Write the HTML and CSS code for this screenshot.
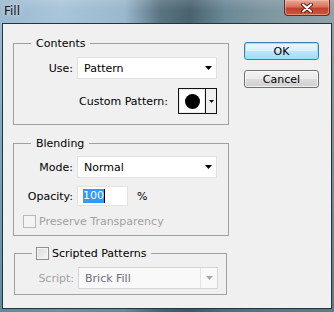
FILE: index.html
```html
<!DOCTYPE html>
<html lang="en">
<head>
    <meta charset="UTF-8">
    <title>Fill</title>
    <link rel="stylesheet" href="styles.css">
</head>
<body>
    <div class="window">
        <div class="titlebar">
            <span class="title">Fill</span>
            <div class="close-btn">
                <svg width="12" height="10" viewBox="0 0 12 10">
                    <path d="M2 1.5L10 8.5M10 1.5L2 8.5" stroke="#5a2018" stroke-width="4" stroke-linecap="round"/>
                    <path d="M2 1.5L10 8.5M10 1.5L2 8.5" stroke="#fff" stroke-width="2" stroke-linecap="round"/>
                </svg>
            </div>
        </div>

        <div class="client">
            <div class="groups">
                <fieldset class="group contents">
                    <legend>Contents</legend>
                    <div class="row">
                        <span class="lbl">Use:</span>
                        <div class="dropdown">
                            <span>Pattern</span>
                            <svg class="arrow" width="7" height="4"><path d="M0 0H7L3.5 4Z"/></svg>
                        </div>
                    </div>
                    <div class="row pattern-row">
                        <span>Custom Pattern:</span>
                        <div class="pattern-picker">
                            <div class="swatch"><span class="dot"></span></div>
                            <div class="picker-arrow">
                                <svg width="5" height="3"><path d="M0 0H5L2.5 3Z"/></svg>
                            </div>
                        </div>
                    </div>
                </fieldset>

                <fieldset class="group blending">
                    <legend>Blending</legend>
                    <div class="row">
                        <span class="lbl">Mode:</span>
                        <div class="dropdown">
                            <span>Normal</span>
                            <svg class="arrow" width="7" height="4"><path d="M0 0H7L3.5 4Z"/></svg>
                        </div>
                    </div>
                    <div class="row opacity-row">
                        <span class="lbl">Opacity:</span>
                        <div class="textbox"><span class="selected">100</span><span class="caret"></span></div>
                        <span class="unit">%</span>
                    </div>
                    <div class="row check-row disabled">
                        <span class="checkbox"></span>
                        <span>Preserve Transparency</span>
                    </div>
                </fieldset>

                <fieldset class="group scripted">
                    <legend><span class="checkbox"></span><span>Scripted Patterns</span></legend>
                    <div class="row">
                        <span class="lbl disabled">Script:</span>
                        <div class="dropdown disabled">
                            <span>Brick Fill</span>
                            <div class="drop-btn">
                                <svg class="arrow" width="7" height="4"><path d="M0 0H7L3.5 4Z"/></svg>
                            </div>
                        </div>
                    </div>
                </fieldset>
            </div>

            <div class="buttons">
                <button class="btn default">OK</button>
                <button class="btn">Cancel</button>
            </div>
        </div>
    </div>
</body>
</html>
```

FILE: styles.css
```css
* {
    box-sizing: border-box;
}
body {
    margin: 0;
    width: 334px;
    height: 312px;
    overflow: hidden;
    font-family: "DejaVu Sans", sans-serif;
    font-size: 11px;
    color: #000;
}
.window {
    height: 312px;
    display: flex;
    flex-direction: column;
    background:
        linear-gradient(180deg, rgba(255,255,255,0.12) 0, rgba(255,255,255,0) 10px, rgba(0,0,0,0) 23px, rgba(30,80,90,0.45) 100%),
        linear-gradient(90deg, #9bb9cf 0, #a9c5da 60px, #9ab7cc 125px, #5a7482 160px, #4a6270 190px, #6a8996 225px, #7f96a0 265px, #8ea2aa 334px);
}
.titlebar {
    height: 23px;
    display: flex;
    justify-content: space-between;
    align-items: flex-start;
}
.title {
    padding: 5px 0 0 4px;
    font-size: 12px;
    line-height: 13px;
    color: #141414;
    text-shadow: 0 0 6px rgba(255,255,255,0.8);
}
.close-btn {
    width: 46px;
    height: 16px;
    margin-right: 4px;
    display: flex;
    align-items: center;
    justify-content: center;
    border: 1px solid #6a2a20;
    border-top: none;
    border-radius: 0 0 4px 4px;
    background: linear-gradient(180deg, #e9a797 0, #d9735f 45%, #c2412b 55%, #c95a3e 100%);
    box-shadow: inset 0 0 0 1px rgba(255,200,180,0.5);
}
.client {
    flex: 1;
    margin: 0 2px 3px 2px;
    border: 1px solid #25343c;
    background: #f0f0f0;
    display: flex;
}
.groups {
    width: 229px;
    padding-left: 10px;
}
.group {
    margin: 0;
    width: 216px;
    min-width: 0;
    border: 1px solid #a0a0a0;
    padding: 7px 0 10px 0;
}
.group legend {
    margin-left: 17px;
    padding: 0 5px;
    line-height: 13px;
    display: flex;
    align-items: center;
}
.contents {
    margin-top: 13px;
}
.blending {
    margin-top: 12px;
    padding: 6px 0 7px 0;
}
.scripted {
    margin-top: 11px;
    margin-left: 1px;
    width: 213px;
    padding: 7px 0 5px 0;
}
.scripted legend {
    padding: 0 5px 0 4px;
}
.row {
    display: flex;
    align-items: center;
    height: 22px;
}
.lbl {
    width: 59px;
    margin-right: 4px;
    text-align: right;
}
.disabled, .lbl.disabled {
    color: #a0a0a0;
}
.dropdown {
    width: 140px;
    height: 22px;
    display: flex;
    align-items: center;
    justify-content: space-between;
    padding: 0 4px 0 6px;
    background: #fff;
    border: 1px solid #e2e2e2;
}
.dropdown.disabled {
    padding-right: 0;
    background: #f9f9f9;
    border-color: #d4d4d4;
    color: #6d6d78;
}
.drop-btn {
    width: 17px;
    height: 20px;
    display: flex;
    align-items: center;
    justify-content: center;
    border-left: 1px solid #e4e4e4;
}
.drop-btn .arrow {
    fill: #a8a8a8;
}
.pattern-row {
    justify-content: flex-end;
    height: 26px;
    margin-top: 9px;
    padding-right: 11px;
}
.pattern-row > span {
    margin-right: 10px;
}
.pattern-picker {
    width: 39px;
    height: 26px;
    display: flex;
    border: 1px solid #111;
}
.swatch {
    width: 26px;
    display: flex;
    align-items: center;
    justify-content: center;
    background: #fff;
    border: 1px solid #ececec;
}
.dot {
    width: 15px;
    height: 15px;
    border-radius: 50%;
    background: #000;
}
.picker-arrow {
    flex: 1;
    display: flex;
    align-items: center;
    justify-content: center;
    border-left: 1px solid #111;
    background: #f0f0f0;
}
.opacity-row {
    height: 20px;
    margin-top: 8px;
}
.textbox {
    width: 51px;
    height: 20px;
    display: flex;
    align-items: center;
    padding-left: 5px;
    background: #fff;
    border: 1px solid #e2e2e2;
}
.selected {
    background: #3399ff;
    color: #fff;
    line-height: 14px;
}
.caret {
    width: 1px;
    height: 14px;
    background: #000;
}
.unit {
    margin-left: 9px;
}
.check-row {
    height: 13px;
    margin-top: 9px;
    padding-left: 9px;
}
.checkbox {
    width: 13px;
    height: 13px;
    margin-right: 3px;
    border: 1px solid #8e8f8f;
    background: linear-gradient(135deg, #dcdcdc 0, #f6f6f6 100%);
    box-shadow: inset 0 0 0 1px #f4f4f4;
}
.check-row .checkbox {
    border-color: #b8b8b8;
    background: #f4f4f4;
}
.buttons {
    margin: 18px 0 0 12px;
    display: flex;
    flex-direction: column;
    gap: 10px;
}
.btn {
    width: 75px;
    height: 18px;
    padding: 0;
    font-family: "DejaVu Sans", sans-serif;
    font-size: 11px;
    color: #000;
    border: 1px solid #707070;
    border-radius: 3px;
    background: linear-gradient(180deg, #f2f2f2 0, #ebebeb 50%, #dddddd 51%, #cfcfcf 100%);
    box-shadow: inset 0 0 0 1px rgba(255,255,255,0.7);
}
.btn.default {
    border-color: #3c7fb1;
    background: linear-gradient(180deg, #eaf6fd 0, #d9f0fc 50%, #bee6fd 51%, #a7d9f5 100%);
    box-shadow: inset 0 0 0 1px #8ee6fb;
}
```
